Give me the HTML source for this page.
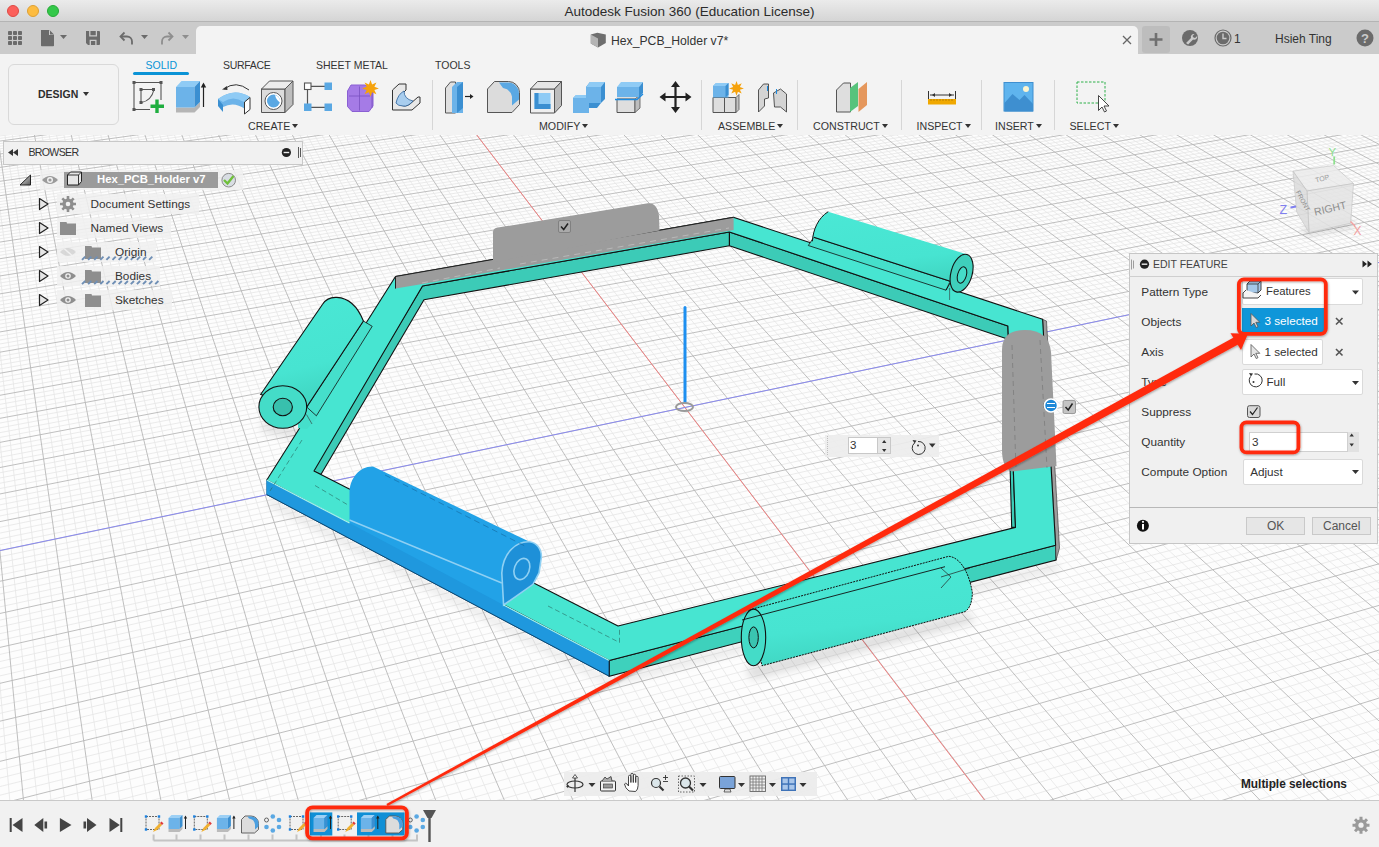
<!DOCTYPE html>
<html><head><meta charset="utf-8">
<style>
*{box-sizing:border-box;margin:0;padding:0}
html,body{width:1379px;height:847px;overflow:hidden;background:#f2f2f2;font-family:"Liberation Sans",sans-serif;color:#333}
.abs{position:absolute}
#title{left:0;top:0;width:1379px;height:22px;background:linear-gradient(#ebebeb,#d5d5d5);border-bottom:1px solid #b4b4b4}
#title .t{position:absolute;left:0;width:1379px;top:4px;text-align:center;font-size:13.5px;color:#2b2b2b}
.tl{position:absolute;top:5px;width:12px;height:12px;border-radius:50%}
#tabbar{left:0;top:22px;width:1379px;height:32px;background:#cbcbcb}
#acttab{left:196px;top:26px;width:942px;height:28px;background:#f3f3f3;border-radius:5px 5px 0 0}
#toolbar{left:0;top:54px;width:1379px;height:81px;background:#f3f3f3}
#viewport{left:0;top:135px;width:1379px;height:665px;background:#fdfdfd;overflow:hidden}
#timeline{left:0;top:800px;width:1379px;height:47px;background:#f1f1f1;border-top:1px solid #c9c9c9}
.lbl{position:absolute;font-size:11px;color:#333;white-space:nowrap}
.dd{display:inline-block;width:0;height:0;border-left:3px solid transparent;border-right:3px solid transparent;border-top:4px solid #333;vertical-align:middle;margin-left:2px;position:relative;top:-1px}
</style></head>
<body>
<div id="title" class="abs">
  <div class="tl" style="left:7px;background:#fc605b;border:0.5px solid #de4a44"></div>
  <div class="tl" style="left:27px;background:#fdbc40;border:0.5px solid #dea033"></div>
  <div class="tl" style="left:47px;background:#34c84a;border:0.5px solid #27aa37"></div>
  <div class="t">Autodesk Fusion 360 (Education License)</div>
</div>
<div id="tabbar" class="abs">
<svg width="200" height="31" style="position:absolute;left:0;top:0">
 <g fill="#6b6b6b">
  <rect x="8" y="9" width="4" height="4" rx="0.8"/><rect x="13" y="9" width="4" height="4" rx="0.8"/><rect x="18" y="9" width="4" height="4" rx="0.8"/>
  <rect x="8" y="14" width="4" height="4" rx="0.8"/><rect x="13" y="14" width="4" height="4" rx="0.8"/><rect x="18" y="14" width="4" height="4" rx="0.8"/>
  <rect x="8" y="19" width="4" height="4" rx="0.8"/><rect x="13" y="19" width="4" height="4" rx="0.8"/><rect x="18" y="19" width="4" height="4" rx="0.8"/>
  <path d="M41 8h8l5 5v10.5a0.8 0.8 0 0 1-0.8 0.8H41.8a0.8 0.8 0 0 1-0.8-0.8z"/>
  <path d="M60 13h7l-3.5 4z"/>
  <path d="M86 9h13a1 1 0 0 1 1 1v12a1 1 0 0 1-1 1H88l-2-2z"/>
  <path d="M124.5 10.5l-4 4 4 4" fill="none" stroke="#6b6b6b" stroke-width="1.8"/><path d="M121 14.5h6a5 5 0 0 1 5 5v3" fill="none" stroke="#6b6b6b" stroke-width="1.8"/>
  <path d="M141 13h7l-3.5 4z"/>
 </g>
 <path d="M89.8 9v4.8h6.6V9" stroke="#cbcbcb" stroke-width="1.3" fill="none"/>
 <path d="M90.3 23v-4.6h5.6V23" stroke="#cbcbcb" stroke-width="1.3" fill="none"/>
 <path d="M49 8v5h5" fill="#cbcbcb"/><path d="M50 8.5l4 4h-4z" fill="#6b6b6b"/>
 <g fill="#8e8e8e"><path d="M168.5 10.5l4 4-4 4" fill="none" stroke="#8e8e8e" stroke-width="1.8"/><path d="M172 14.5h-5a5 5 0 0 0-5 5v3" fill="none" stroke="#8e8e8e" stroke-width="1.8"/><path d="M182 13h7l-3.5 4z"/></g>
</svg>
<svg width="240" height="31" style="position:absolute;left:1139px;top:0">
 <rect x="3" y="4" width="28" height="27" rx="3" fill="#bdbdbd"/>
 <path d="M17 11v13M10.5 17.5h13" stroke="#707070" stroke-width="2.6"/>
 <circle cx="51" cy="16" r="8" fill="#6b6b6b"/>
 <path d="M47 21l5-5a3 3 0 0 1 3.5-4l-2 2 1 1.5 1.6 0.4 2-2a3 3 0 0 1-4 3.6l-5 5z" fill="#cbcbcb"/>
 <circle cx="84" cy="16" r="8" fill="none" stroke="#6b6b6b" stroke-width="1.2"/>
 <circle cx="84" cy="16" r="6.3" fill="#6b6b6b"/>
 <path d="M84 11.5v5h3.5" stroke="#cbcbcb" stroke-width="1.4" fill="none"/>
 <text x="95" y="21" font-size="12" fill="#333" font-family="Liberation Sans">1</text>
 <text x="136" y="21" font-size="12" fill="#333" font-family="Liberation Sans">Hsieh Ting</text>
 <circle cx="226" cy="16" r="8.5" fill="#6b6b6b"/>
 <text x="226" y="21" font-size="13" font-weight="700" fill="#cbcbcb" text-anchor="middle" font-family="Liberation Sans">?</text>
</svg>
</div>
<div id="acttab" class="abs">
 <svg width="20" height="20" style="position:absolute;left:394px;top:5px"><path d="M0.8 3.5l6.5-1.8 8.5 1.8v8.5l-7.8 4.5-7.2-4z" fill="#6e6e6e"/><path d="M0.8 3.5l7.2 4v9l-7.2-4z" fill="#b4b4b4"/></svg>
 <div class="lbl" style="left:415px;top:8px;font-size:12.2px;color:#333">Hex_PCB_Holder v7*</div>
 <svg width="14" height="14" style="position:absolute;left:924px;top:7px"><path d="M3 3l8 8M11 3l-8 8" stroke="#666" stroke-width="1.3"/></svg>
</div>
<div id="toolbar" class="abs">
 <div class="abs" style="left:8px;top:10px;width:111px;height:61px;border:1.5px solid #d9d9d9;border-radius:6px"></div>
 <div class="lbl" style="left:38px;top:34px;font-size:10.5px;font-weight:700;color:#2d2d2d">DESIGN<span class="dd" style="margin-left:5px"></span></div>
 <div class="lbl" style="left:145.5px;top:5px;font-size:10.5px;color:#0a93d6">SOLID</div>
 <div class="abs" style="left:133px;top:18px;width:56px;height:3px;background:#0a93d6;border-radius:1.5px"></div>
 <div class="lbl" style="left:223px;top:5px;font-size:10.5px;letter-spacing:-0.3px;color:#333">SURFACE</div>
 <div class="lbl" style="left:316px;top:5px;font-size:10.5px;color:#333">SHEET METAL</div>
 <div class="lbl" style="left:435px;top:5px;font-size:10.5px;color:#333">TOOLS</div>
 <div class="lbl" style="left:248px;top:66px;font-size:10.65px">CREATE<span class="dd"></span></div>
 <div class="lbl" style="left:539px;top:66px;font-size:10.65px">MODIFY<span class="dd"></span></div>
 <div class="lbl" style="left:718px;top:66px;font-size:10.65px">ASSEMBLE<span class="dd"></span></div>
 <div class="lbl" style="left:813px;top:66px;font-size:10.65px">CONSTRUCT<span class="dd"></span></div>
 <div class="lbl" style="left:916.5px;top:66px;font-size:10.65px">INSPECT<span class="dd"></span></div>
 <div class="lbl" style="left:995px;top:66px;font-size:10.65px">INSERT<span class="dd"></span></div>
 <div class="lbl" style="left:1069.5px;top:66px;font-size:10.65px">SELECT<span class="dd"></span></div>
 <svg width="1379" height="81" viewBox="0 54 1379 81" style="position:absolute;left:0;top:0">
  <g stroke="#d6d6d6" stroke-width="1"><path d="M432.5 80v50M701.5 80v50M797.5 80v50M901.5 80v50M981.5 80v50M1054.5 80v50"/></g>
  <g id="sketch">
 <path d="M134 82.5h27v27h-27z M141 89.5h13 M141 89.5v13" fill="none" stroke="#555" stroke-width="1.1"/>
 <path d="M141.5 102.5q10-2 12.5-13" fill="none" stroke="#555" stroke-width="1.1"/>
 <g fill="#555"><rect x="132.5" y="81" width="3" height="3"/><rect x="159.5" y="81" width="3" height="3"/><rect x="132.5" y="108" width="3" height="3"/><rect x="139.5" y="88" width="3" height="3"/><rect x="152" y="88" width="3" height="3"/><rect x="139.5" y="101" width="3" height="3"/></g>
 <rect x="150" y="100" width="15" height="13" fill="#f3f3f3"/>
 <path d="M157 99.5v13.5M150.5 106.2h13.5" stroke="#1fae3f" stroke-width="3.4"/>
</g>
<g id="extrude">
 <path d="M176 107.5h18.5l5.5-5.5v5l-5.5 5.5H176z" fill="#b5b5b5"/>
 <path d="M176 87h18.5v20.5H176z" fill="#6cb3e9"/>
 <path d="M176 87l5.5-6h18.5l-5.5 6z" fill="#8fcbf5"/>
 <path d="M194.5 87l5.5-6v21l-5.5 5.5z" fill="#3b8fd1"/>
 <path d="M203.5 107V84" stroke="#222" stroke-width="1.2"/><path d="M200.8 87.5l2.7-5 2.7 5z" fill="#222"/>
</g>
<g id="revolve">
 <path d="M218 99q16-12 32-2v6l-5 6q-11-8-22-2l-5-3z" fill="#6cb3e9"/>
 <path d="M218 99q16-12 32-2l-6 5q-11-7-21 0z" fill="#8fcbf5"/>
 <path d="M218 99v7l5 6v-7z" fill="#3b8fd1"/>
 <path d="M244.5 102l5.5-4.5v12l-5.5 4.5z" fill="#fff" stroke="#333" stroke-width="1"/>
 <path d="M224 89q12-9 25 1" fill="none" stroke="#333" stroke-width="1"/><path d="M222 89.5l5-3.5 0.5 4z" fill="#333"/>
</g>
<g id="hole">
 <path d="M261.5 89h23.5v23.5h-23.5z" fill="#dcdcdc" stroke="#555" stroke-width="1"/>
 <path d="M261.5 89l8-8h23.5l-8 8z" fill="#ececec" stroke="#555" stroke-width="1"/>
 <path d="M285 89l8-8v23.5l-8 8z" fill="#bdbdbd" stroke="#555" stroke-width="1"/>
 <circle cx="273.5" cy="101" r="8.5" fill="#fff" stroke="#555" stroke-width="1"/>
 <circle cx="273.5" cy="101" r="6.5" fill="#5aa8e3"/>
 <path d="M275 95q1 5 5 7.5a6.5 6.5 0 0 0-5-7.5z" fill="#fff"/>
</g>
<g id="pattern">
 <path d="M311 86.3h14M307.5 89.6v14.4M311 107.3h14" stroke="#555" stroke-width="1.2"/>
 <rect x="304.5" y="83" width="6.5" height="6.5" fill="#fff" stroke="#555" stroke-width="1.1"/>
 <rect x="324.5" y="82.5" width="7.5" height="7.5" fill="#5aa8e3"/>
 <rect x="304" y="103.5" width="7.5" height="7.5" fill="#5aa8e3"/>
 <rect x="324.5" y="103.5" width="7.5" height="7.5" fill="#5aa8e3"/>
</g>
<g id="form">
 <path d="M351 85h14l8 6v15l-4 5.5h-17l-4.5-5v-15.5z" fill="#a57be6" stroke="#8a5fd3" stroke-width="1"/>
 <path d="M349 96h21M359.5 86.5v24M372 92v16" stroke="#7a52c0" stroke-width="0.8"/>
 <path d="M370.5 80l1.6 4.5 4.3-2-2 4.3 4.5 1.6-4.5 1.6 2 4.3-4.3-2-1.6 4.5-1.6-4.5-4.3 2 2-4.3-4.5-1.6 4.5-1.6-2-4.3 4.3 2z" fill="#f5a20c"/>
</g>
<g id="sweep">
 <path d="M392.5 90l6.5-6h7v6l-6 6v8q4 4 10 0l8-7h2v6l-8 7h-19.5z" fill="#e8e8e8" stroke="#333" stroke-width="1"/>
 <path d="M396 103q2-9 8-12 0 8 9 10-5 6-10 5-5-0-7-3z" fill="#a8cdee" stroke="#2a5f9a" stroke-width="0.8"/>
</g>
<g id="presspull">
 <path d="M445.5 88l5-6h5v31h-10z" fill="#e0e0e0" stroke="#555" stroke-width="1"/>
 <path d="M452 87l5-5h6v31h-11z" fill="#6cb3e9"/><path d="M463 82v26l-6 5V87z" fill="#3b8fd1"/>
 <path d="M465 96.5h6" stroke="#222" stroke-width="1.2"/><path d="M470 94l3.5 2.5-3.5 2.5z" fill="#222"/>
</g>
<g id="fillet">
 <path d="M487.5 89l7-7.5h14a11 11 0 0 1 11 11v12l-7.5 8h-24.5z" fill="#dcdcdc" stroke="#555" stroke-width="1"/>
 <path d="M499 82.5h9a11 11 0 0 1 11 11v6l-7 6v-9a11 11 0 0 0-9-8.5z" fill="#5aa8e3"/>
</g>
<g id="shell">
 <path d="M530.5 89h24v24h-24z" fill="#efefef" stroke="#555" stroke-width="1"/>
 <path d="M530.5 89l7-7.5h24l-7 7.5z" fill="#e6e6e6" stroke="#555" stroke-width="1"/>
 <path d="M554.5 89l7-7.5v24l-7 7.5z" fill="#bdbdbd" stroke="#555" stroke-width="1"/>
 <path d="M534.5 93h16v16h-16z" fill="#8fcbf5"/><path d="M534.5 93h4v11h12v5h-16z" fill="#3b8fd1"/>
</g>
<g id="combine">
 <path d="M586 87l4-5h15v17l-4 4z" fill="#3b8fd1"/><path d="M586 87l4-5h15l-4 5z" fill="#8fcbf5"/>
 <path d="M573 98l3-3h13v18h-16z" fill="#6cb3e9"/><path d="M586 87h15v16h-12v10h-16V98h13z" fill="#6cb3e9"/>
 <path d="M573 98l3-3h10v3z" fill="#8fcbf5"/><path d="M589 103h12l-4 5h-8z" fill="#3b8fd1"/>
</g>
<g id="split">
 <path d="M617 94h18v-5l5-4.5v14l-5 4h-18z" fill="#dedede"/><path d="M617 99h18v13.5h-18z" fill="#dedede" stroke="#555" stroke-width="1"/>
 <path d="M635 99l5-4v13l-5 4.5z" fill="#bdbdbd" stroke="#555" stroke-width="0.8"/>
 <path d="M617 87l4-5h22l-4 5z" fill="#8fcbf5"/><path d="M617 87h22v10h-22z" fill="#6cb3e9"/><path d="M639 87l4-5v11l-4 4z" fill="#3b8fd1"/>
 <path d="M615 99.5h22l6-5.5" stroke="#1d8be0" stroke-width="1.3" fill="none"/>
</g>
<g id="move">
 <path d="M675.5 84v26M662 97h27" stroke="#222" stroke-width="2.2"/>
 <path d="M675.5 81l-4.5 6h9zM675.5 113l-4.5-6h9zM659.5 97l6-4.5v9zM691.5 97l-6-4.5v9z" fill="#222"/>
</g>
<g id="newcomp">
 <path d="M713 97.5h11.5v15H713zM724.5 97.5h11.5v15h-11.5z" fill="#dedede" stroke="#555" stroke-width="1"/>
 <path d="M736 97.5l3-3v15l-3 3z" fill="#c4c4c4" stroke="#555" stroke-width="0.8"/>
 <path d="M713 86l3-3h12.5v14.5H713z" fill="#6cb3e9"/><path d="M713 86l3-3h12.5l-3 3z" fill="#8fcbf5"/><path d="M725.5 86l3-3v11.5l-3 3z" fill="#3b8fd1"/>
 <path d="M736.5 81l1.4 4 3.8-1.8-1.8 3.8 4 1.4-4 1.4 1.8 3.8-3.8-1.8-1.4 4-1.4-4-3.8 1.8 1.8-3.8-4-1.4 4-1.4-1.8-3.8 3.8 1.8z" fill="#f5a20c"/>
</g>
<g id="joint">
 <path d="M758.5 90l5-6h5v14l-4 1v7l-6 6z" fill="#d4d4d4" stroke="#444" stroke-width="0.9"/>
 <path d="M773.5 93l7-4 6 5v18l-6-5h-6z" fill="#d4d4d4" stroke="#444" stroke-width="0.9"/>
 <path d="M767.5 91v-5M776.5 89v5" stroke="#1d8be0" stroke-width="1"/>
</g>
<g id="construct">
 <path d="M836.5 90l7-7h7v29h-14z" fill="#dedede" stroke="#555" stroke-width="1"/>
 <path d="M850 88l8-6v24l-8 6z" fill="#57c37c"/>
 <path d="M858 100l8-7v-11l-8 6z" fill="#fff0"/><path d="M857.5 93l8.5-7v23l-8.5 7z" fill="#e5975c" transform="translate(1 -4)"/>
</g>
<g id="measure">
 <path d="M928.5 91v8M955.5 91v8M930 95h24" stroke="#333" stroke-width="1"/>
 <path d="M932 95l3-2v4zM952 95l-3-2v4z" fill="#333"/>
 <rect x="928" y="99" width="28" height="5.5" fill="#f0a800"/>
 <path d="M931 99v2M934 99v2M937 99v2M940 99v2M943 99v2M946 99v2M949 99v2M952 99v2" stroke="#9a6a00" stroke-width="0.6"/>
</g>
<g id="insert">
 <rect x="1004" y="82.5" width="29" height="28.5" fill="#5fb4ee" stroke="#3f8fd0" stroke-width="1"/>
 <path d="M1004.5 103l8-9 7 6 5-5 8.5 9v7.5h-28.5z" fill="#3e8fd0"/>
 <circle cx="1026" cy="89" r="3" fill="#fdf5d0"/>
</g>
<g id="select">
 <rect x="1077" y="82" width="28" height="21" fill="none" stroke="#2eb04a" stroke-width="1" stroke-dasharray="2.5 1.5"/>
 <path d="M1098.5 95.5v15l3.5-3.5 2.5 5 2-1-2.5-5h5z" fill="#fff" stroke="#333" stroke-width="0.9"/>
</g>

 </svg>
</div>
<div id="viewport" class="abs">
<svg width="1379" height="665" viewBox="0 135 1379 665" style="position:absolute;left:0;top:0">
<path d="M-1361.4 2322.1L-418.7 90.8M-1327.2 2307.7L-411.4 89.9M-1293.3 2293.4L-404.1 89.1M-1259.7 2279.3L-396.8 88.2M-1193.4 2251.4L-382.3 86.5M-1160.8 2237.7L-375.1 85.6M-1128.5 2224.1L-367.9 84.8M-1096.4 2210.7L-360.7 83.9M-1033.3 2184.1L-346.4 82.2M-1002.1 2171.0L-339.2 81.4M-971.3 2158.0L-332.1 80.5M-940.7 2145.2L-325.0 79.7M-880.4 2119.8L-310.9 78.0M-850.7 2107.3L-303.8 77.1M-821.2 2094.9L-296.8 76.3M-792.0 2082.7L-289.8 75.5M-734.4 2058.4L-275.8 73.8M-705.9 2046.5L-268.8 73.0M-677.8 2034.6L-261.9 72.1M-649.8 2022.9L-254.9 71.3M-594.7 1999.7L-241.1 69.7M-567.5 1988.3L-234.2 68.8M-540.5 1976.9L-227.3 68.0M-513.8 1965.7L-220.5 67.2M-461.0 1943.5L-206.8 65.6M-434.9 1932.5L-200.0 64.8M-409.1 1921.7L-193.2 63.9M-383.5 1910.9L-186.4 63.1M-332.8 1889.6L-172.9 61.5M-307.9 1879.1L-166.2 60.7M-283.1 1868.7L-159.5 59.9M-258.5 1858.4L-152.8 59.1M-210.0 1838.0L-139.4 57.5M-186.0 1827.9L-132.8 56.7M-162.2 1817.9L-126.1 56.0M-138.6 1808.0L-119.5 55.2M-92.0 1788.4L-106.3 53.6M-69.0 1778.7L-99.7 52.8M-46.1 1769.1L-93.2 52.0M-23.5 1759.6L-86.6 51.2M21.3 1740.7L-73.6 49.7M43.4 1731.4L-67.1 48.9M65.4 1722.2L-60.6 48.1M87.2 1713.0L-54.1 47.4M130.3 1694.9L-41.2 45.8M151.6 1686.0L-34.8 45.1M172.7 1677.1L-28.4 44.3M193.6 1668.3L-22.0 43.5M235.1 1650.8L-9.2 42.0M255.6 1642.2L-2.8 41.3M275.9 1633.7L3.5 40.5M296.1 1625.2L9.8 39.8M336.0 1608.4L22.5 38.2M355.8 1600.1L28.7 37.5M375.4 1591.9L35.0 36.8M394.8 1583.7L41.3 36.0M433.3 1567.5L53.8 34.5M452.3 1559.5L60.0 33.8M471.2 1551.6L66.2 33.0M490.0 1543.7L72.4 32.3M527.1 1528.1L84.7 30.8M545.4 1520.4L90.9 30.1M563.6 1512.7L97.0 29.4M581.7 1505.1L103.1 28.6M617.5 1490.1L115.3 27.2M635.3 1482.6L121.4 26.5M652.8 1475.2L127.5 25.7M670.3 1467.9L133.5 25.0M704.9 1453.3L145.6 23.6M722.0 1446.1L151.6 22.9M739.0 1439.0L157.6 22.1M755.9 1431.9L163.6 21.4M789.3 1417.9L175.6 20.0M805.8 1410.9L181.5 19.3M822.2 1404.0L187.5 18.6M838.5 1397.1L193.4 17.9M870.8 1383.6L205.2 16.5M886.8 1376.8L211.1 15.8M902.7 1370.2L217.0 15.1M918.5 1363.5L222.8 14.4M949.7 1350.4L234.5 13.0M965.2 1343.9L240.3 12.3M980.5 1337.4L246.2 11.6M995.8 1331.0L252.0 10.9M1026.0 1318.3L263.5 9.5M1041.0 1312.0L269.3 8.8M1055.9 1305.8L275.0 8.1M1070.7 1299.5L280.8 7.5M1099.9 1287.2L292.2 6.1M1114.4 1281.1L297.9 5.4M1128.9 1275.1L303.6 4.7M1143.2 1269.1L309.3 4.1M1171.5 1257.1L320.6 2.7M1185.6 1251.2L326.2 2.0M1199.5 1245.4L331.9 1.4M1213.4 1239.5L337.5 0.7M1240.9 1228.0L348.7 -0.6M1254.5 1222.2L354.3 -1.3M1268.1 1216.5L359.8 -2.0M1281.5 1210.9L365.4 -2.6M1308.2 1199.7L376.5 -3.9M1321.4 1194.1L382.0 -4.6M1334.5 1188.6L387.5 -5.3M1347.6 1183.1L393.0 -5.9M1373.5 1172.2L404.0 -7.2M1386.3 1166.9L409.5 -7.9M1399.0 1161.5L414.9 -8.5M1411.7 1156.2L420.4 -9.2M1436.8 1145.6L431.2 -10.5M1449.2 1140.4L436.6 -11.1M1461.6 1135.2L442.0 -11.8M1473.9 1130.0L447.4 -12.4M1498.3 1119.8L458.2 -13.7M1510.4 1114.7L463.5 -14.3M1522.4 1109.6L468.9 -15.0M1534.3 1104.6L474.2 -15.6M1558.0 1094.6L484.8 -16.9M1569.8 1089.7L490.1 -17.5M1581.5 1084.8L495.4 -18.1M1593.1 1079.9L500.7 -18.7M1616.1 1070.2L511.2 -20.0M1627.5 1065.4L516.5 -20.6M1638.9 1060.7L521.7 -21.2M1650.1 1055.9L527.0 -21.9M1672.5 1046.5L537.4 -23.1M1683.6 1041.8L542.6 -23.7M1694.7 1037.2L547.8 -24.4M1705.6 1032.6L552.9 -25.0M1727.4 1023.4L563.2 -26.2M1738.2 1018.9L568.4 -26.8M1748.9 1014.4L573.5 -27.4M1759.6 1009.9L578.6 -28.0M1780.8 1001.0L588.9 -29.2M1791.3 996.6L593.9 -29.9M1801.8 992.2L599.0 -30.5M1812.2 987.8L604.1 -31.1M1832.8 979.1L614.2 -32.3M1843.0 974.8L619.2 -32.9M1853.2 970.5L624.3 -33.5M1863.3 966.3L629.3 -34.1M1883.4 957.8L639.3 -35.3M1893.4 953.7L644.3 -35.9M1903.3 949.5L649.3 -36.4M1913.1 945.3L654.2 -37.0M1932.7 937.1L664.2 -38.2M1942.4 933.0L669.1 -38.8M1952.0 929.0L674.0 -39.4M1961.6 924.9L679.0 -40.0M1980.7 916.9L688.8 -41.2M1990.2 913.0L693.7 -41.7M1999.6 909.0L698.5 -42.3M2008.9 905.1L703.4 -42.9M2027.5 897.3L713.1 -44.1M2036.7 893.4L718.0 -44.6M2045.9 889.5L722.8 -45.2M2055.0 885.7L727.6 -45.8M2073.1 878.1L737.3 -46.9M2082.1 874.3L742.1 -47.5M2091.1 870.5L746.9 -48.1M2100.0 866.8L751.6 -48.6M2117.7 859.4L761.2 -49.8M2126.4 855.7L765.9 -50.3M2135.1 852.0L770.7 -50.9M2143.8 848.4L775.4 -51.5M2161.1 841.1L784.8 -52.6M2169.6 837.5L789.5 -53.2M2178.1 833.9L794.2 -53.7M2186.6 830.4L798.9 -54.3M2203.4 823.3L808.3 -55.4M2211.8 819.8L812.9 -56.0M2220.1 816.3L817.6 -56.5M2228.4 812.8L822.2 -57.1M2244.8 805.9L831.5 -58.2M2253.0 802.5L836.1 -58.7M2261.1 799.1L840.7 -59.3M2269.1 795.7L845.3 -59.8M2285.2 788.9L854.5 -60.9M2293.1 785.6L859.1 -61.4M2301.1 782.2L863.6 -62.0M2309.0 778.9L868.2 -62.5M2324.6 772.3L877.3 -63.6M2332.4 769.1L881.8 -64.2M2340.1 765.8L886.3 -64.7M2347.9 762.6L890.8 -65.2M2363.2 756.1L899.8 -66.3M2370.8 752.9L904.3 -66.8M2378.3 749.8L908.8 -67.4M2385.9 746.6L913.3 -67.9M2400.8 740.3L922.2 -69.0M2408.2 737.2L926.6 -69.5M2415.6 734.1L931.1 -70.0M2423.0 731.0L935.5 -70.6M2437.6 724.8L944.3 -71.6M2444.9 721.8L948.7 -72.1M2452.1 718.7L953.1 -72.7M2459.3 715.7L957.5 -73.2M2473.6 709.7L966.3 -74.2M2480.7 706.7L970.6 -74.7M2487.8 703.7L975.0 -75.3M2494.8 700.8L979.3 -75.8M2508.8 694.9L988.0 -76.8M2515.8 692.0L992.3 -77.3M2522.7 689.1L996.6 -77.8M2529.6 686.2L1001.0 -78.4M2543.3 680.4L1009.5 -79.4M2550.0 677.6L1013.8 -79.9M2556.8 674.7L1018.1 -80.4M2563.6 671.9L1022.4 -80.9M2576.9 666.3L1030.9 -81.9M2583.6 663.5L1035.1 -82.4M2590.2 660.7L1039.4 -82.9M2596.8 657.9L1043.6 -83.4M2609.9 652.4L1052.0 -84.4M2616.4 649.7L1056.2 -84.9M2622.9 646.9L1060.4 -85.4M2629.4 644.2L1064.6 -85.9M2642.2 638.8L1073.0 -86.9M2648.6 636.1L1077.2 -87.4M2654.9 633.5L1081.3 -87.9M2661.2 630.8L1085.5 -88.4M2673.8 625.5L1093.7 -89.4M2680.0 622.9L1097.9 -89.9M2686.3 620.3L1102.0 -90.4M2692.4 617.7L1106.1 -90.9M2704.8 612.5L1114.3 -91.9M2710.9 610.0L1118.4 -92.4M2717.0 607.4L1122.5 -92.8M2723.0 604.8L1126.6 -93.3M2735.1 599.8L1134.7 -94.3M2741.1 597.3L1138.8 -94.8M2747.0 594.7L1142.8 -95.3M2753.0 592.3L1146.9 -95.7M2764.8 587.3L1154.9 -96.7M2770.6 584.8L1159.0 -97.2M2776.5 582.4L1163.0 -97.7M2782.3 579.9L1167.0 -98.1M2793.9 575.0L1175.0 -99.1M2799.6 572.6L1178.9 -99.6M2805.4 570.2L1182.9 -100.0M2811.1 567.8L1186.9 -100.5M-1380.4 2300.4L2802.2 559.5M-1365.1 2265.0L2787.8 553.6M-1350.1 2230.4L2773.6 547.7M-1335.6 2196.7L2759.4 541.9M-1307.4 2131.5L2731.6 530.5M-1293.8 2100.0L2717.9 524.9M-1280.5 2069.3L2704.3 519.3M-1267.5 2039.2L2690.8 513.8M-1242.4 1981.0L2664.3 502.9M-1230.2 1952.9L2651.2 497.6M-1218.3 1925.3L2638.3 492.3M-1206.7 1898.4L2625.5 487.0M-1184.1 1846.1L2600.1 476.6M-1173.1 1820.7L2587.7 471.5M-1162.4 1795.9L2575.3 466.5M-1151.9 1771.6L2563.1 461.4M-1131.5 1724.4L2538.9 451.5M-1121.6 1701.4L2527.0 446.6M-1111.9 1679.0L2515.1 441.8M-1102.3 1656.9L2503.4 437.0M-1083.8 1614.0L2480.3 427.5M-1074.8 1593.2L2468.9 422.9M-1066.0 1572.8L2457.6 418.2M-1057.3 1552.7L2446.4 413.6M-1040.4 1513.6L2424.3 404.6M-1032.2 1494.5L2413.4 400.1M-1024.1 1475.9L2402.5 395.7M-1016.2 1457.5L2391.8 391.3M-1000.7 1421.7L2370.6 382.6M-993.2 1404.3L2360.2 378.3M-985.8 1387.1L2349.8 374.0M-978.5 1370.2L2339.5 369.8M-964.3 1337.4L2319.2 361.5M-957.3 1321.3L2309.2 357.4M-950.5 1305.5L2299.2 353.3M-943.8 1290.0L2289.3 349.3M-930.7 1259.7L2269.8 341.3M-924.3 1244.8L2260.2 337.3M-918.0 1230.3L2250.7 333.4M-911.8 1215.9L2241.2 329.5M-899.7 1187.8L2222.5 321.8M-893.7 1174.1L2213.2 318.0M-887.9 1160.6L2204.0 314.3M-882.1 1147.3L2194.9 310.6M-870.9 1121.3L2176.9 303.2M-865.4 1108.6L2168.0 299.5M-860.0 1096.0L2159.2 295.9M-854.6 1083.6L2150.4 292.3M-844.2 1059.4L2133.1 285.2M-839.0 1047.6L2124.6 281.7M-834.0 1035.9L2116.1 278.2M-829.0 1024.3L2107.6 274.8M-819.2 1001.8L2091.0 267.9M-814.5 990.7L2082.7 264.6M-809.7 979.8L2074.6 261.2M-805.1 969.0L2066.4 257.9M-796.0 947.9L2050.4 251.3M-791.5 937.5L2042.4 248.1M-787.1 927.3L2034.6 244.8M-782.7 917.2L2026.7 241.6M-774.2 897.4L2011.3 235.3M-770.0 887.7L2003.6 232.1M-765.8 878.2L1996.0 229.0M-761.7 868.7L1988.4 225.9M-753.7 850.1L1973.5 219.8M-749.8 841.0L1966.1 216.8M-745.9 832.0L1958.8 213.8M-742.1 823.1L1951.5 210.8M-734.5 805.6L1937.1 204.9M-730.8 797.1L1930.0 202.0M-727.1 788.6L1922.9 199.1M-723.5 780.2L1915.9 196.2M-716.4 763.7L1901.9 190.5M-712.9 755.7L1895.0 187.6M-709.4 747.7L1888.2 184.8M-706.0 739.8L1881.4 182.0M-699.3 724.2L1867.9 176.5M-696.0 716.6L1861.3 173.8M-692.8 709.0L1854.7 171.1M-689.5 701.6L1848.1 168.4M-683.2 686.9L1835.1 163.1M-680.1 679.6L1828.7 160.4M-677.0 672.5L1822.3 157.8M-673.9 665.4L1815.9 155.2M-667.9 651.5L1803.3 150.0M-664.9 644.7L1797.1 147.5M-662.0 637.9L1790.9 144.9M-659.1 631.2L1784.7 142.4M-653.4 618.0L1772.6 137.4M-650.6 611.5L1766.5 135.0M-647.8 605.1L1760.5 132.5M-645.1 598.7L1754.6 130.1M-639.7 586.2L1742.8 125.2M-637.0 580.0L1736.9 122.8M-634.4 573.9L1731.1 120.4M-631.8 567.9L1725.3 118.1M-626.6 555.9L1713.9 113.4M-624.1 550.1L1708.2 111.1M-621.6 544.3L1702.6 108.8M-619.1 538.5L1697.0 106.5M-614.2 527.2L1685.9 101.9M-611.8 521.6L1680.4 99.7M-609.4 516.0L1675.0 97.4M-607.0 510.6L1669.5 95.2M-602.3 499.7L1658.8 90.8M-600.0 494.4L1653.5 88.6M-597.7 489.1L1648.2 86.5M-595.5 483.9L1642.9 84.3M-591.0 473.6L1632.5 80.0M-588.8 468.5L1627.3 77.9M-586.6 463.5L1622.2 75.8M-584.5 458.5L1617.0 73.7M-580.2 448.6L1606.9 69.5M-578.1 443.7L1601.9 67.5M-576.0 438.9L1596.9 65.4M-574.0 434.2L1591.9 63.4M-569.9 424.7L1582.1 59.4M-567.9 420.1L1577.2 57.4M-565.9 415.5L1572.4 55.4M-563.9 410.9L1567.6 53.4M-560.0 401.9L1558.0 49.5M-558.1 397.4L1553.2 47.5M-556.2 393.0L1548.5 45.6M-554.3 388.6L1543.9 43.7M-550.6 380.0L1534.6 39.9M-548.7 375.7L1529.9 38.0M-546.9 371.5L1525.4 36.1M-545.1 367.3L1520.8 34.2M-541.5 359.0L1511.8 30.5M-539.8 354.9L1507.3 28.7M-538.0 350.9L1502.8 26.9M-536.3 346.9L1498.4 25.1M-532.8 338.9L1489.6 21.5M-531.1 335.0L1485.2 19.7M-529.4 331.1L1480.9 17.9M-527.8 327.2L1476.6 16.1M-524.5 319.6L1468.0 12.6M-522.8 315.8L1463.8 10.9M-521.2 312.1L1459.6 9.2M-519.6 308.3L1455.4 7.4M-516.4 301.0L1447.0 4.0M-514.9 297.4L1442.9 2.3M-513.3 293.8L1438.8 0.6M-511.8 290.2L1434.7 -1.0M-508.7 283.1L1426.6 -4.4M-507.2 279.6L1422.6 -6.0M-505.7 276.2L1418.6 -7.7M-504.2 272.7L1414.6 -9.3M-501.3 265.9L1406.7 -12.5M-499.8 262.6L1402.8 -14.1M-498.4 259.2L1398.9 -15.7M-497.0 255.9L1395.0 -17.3M-494.1 249.4L1387.3 -20.5M-492.7 246.1L1383.5 -22.0M-491.3 242.9L1379.7 -23.6M-490.0 239.7L1375.9 -25.2M-487.2 233.4L1368.4 -28.2M-485.9 230.3L1364.6 -29.8M-484.5 227.2L1360.9 -31.3M-483.2 224.1L1357.3 -32.8M-480.6 218.0L1349.9 -35.8M-479.3 215.0L1346.3 -37.3M-478.0 212.0L1342.7 -38.8M-476.7 209.0L1339.1 -40.2M-474.2 203.1L1331.9 -43.2M-472.9 200.2L1328.4 -44.6M-471.6 197.3L1324.9 -46.1M-470.4 194.5L1321.4 -47.5M-468.0 188.8L1314.4 -50.4M-466.7 186.0L1310.9 -51.8M-465.5 183.2L1307.5 -53.2M-464.3 180.4L1304.1 -54.6M-462.0 174.9L1297.3 -57.4M-460.8 172.2L1293.9 -58.8M-459.6 169.5L1290.5 -60.1M-458.5 166.8L1287.2 -61.5M-456.2 161.5L1280.5 -64.2M-455.0 158.9L1277.2 -65.6M-453.9 156.2L1274.0 -66.9M-452.8 153.7L1270.7 -68.3M-450.6 148.5L1264.2 -70.9M-449.5 146.0L1261.0 -72.2M-448.4 143.4L1257.8 -73.6M-447.3 140.9L1254.6 -74.9M-445.1 136.0L1248.3 -77.5M-444.1 133.5L1245.1 -78.8M-443.0 131.0L1242.0 -80.0M-442.0 128.6L1238.9 -81.3M-439.9 123.8L1232.7 -83.9M-438.8 121.4L1229.6 -85.1M-437.8 119.0L1226.5 -86.4M-436.8 116.7L1223.5 -87.6M-434.8 112.0L1217.4 -90.1M-433.8 109.7L1214.4 -91.3M-432.8 107.4L1211.4 -92.6M-431.8 105.1L1208.5 -93.8M-429.8 100.6L1202.5 -96.2M-428.9 98.3L1199.6 -97.4M-427.9 96.1L1196.7 -98.6M-427.0 93.9L1193.8 -99.8" stroke="#e6e6e6" stroke-width="0.8" fill="none"/>
<path d="M-1396.0 2336.6L-426.0 91.7M-1226.4 2265.3L-389.6 87.3M-1064.7 2197.3L-353.5 83.1M-910.4 2132.5L-317.9 78.8M-763.1 2070.5L-282.8 74.6M-622.1 2011.3L-248.0 70.5M-487.3 1954.5L-213.6 66.4M-358.0 1900.2L-179.7 62.3M-234.1 1848.1L-146.1 58.3M-115.2 1798.1L-112.9 54.4M-1.0 1750.1L-80.1 50.5M108.8 1703.9L-47.7 46.6M214.4 1659.5L-15.6 42.8M316.1 1616.8L16.2 39.0M414.1 1575.6L47.5 35.3M508.6 1535.9L78.5 31.6M599.7 1497.6L109.2 27.9M687.7 1460.6L139.6 24.3M772.6 1424.9L169.6 20.7M854.7 1390.3L199.3 17.2M934.1 1356.9L228.7 13.7M1011.0 1324.6L257.7 10.2M1085.4 1293.4L286.5 6.8M1157.4 1263.1L314.9 3.4M1227.2 1233.7L343.1 0.0M1294.9 1205.3L371.0 -3.3M1360.6 1177.7L398.5 -6.6M1424.3 1150.9L425.8 -9.8M1486.1 1124.9L452.8 -13.0M1546.2 1099.6L479.5 -16.2M1604.6 1075.1L506.0 -19.4M1661.4 1051.2L532.2 -22.5M1716.6 1028.0L558.1 -25.6M1770.3 1005.4L583.8 -28.6M1822.5 983.4L609.2 -31.7M1873.4 962.1L634.3 -34.7M1922.9 941.2L659.2 -37.6M1971.2 920.9L683.9 -40.6M2018.2 901.2L708.3 -43.5M2064.1 881.9L732.5 -46.4M2108.8 863.1L756.4 -49.2M2152.5 844.7L780.1 -52.0M2195.0 826.8L803.6 -54.8M2236.6 809.3L826.9 -57.6M2277.2 792.3L849.9 -60.4M2316.8 775.6L872.7 -63.1M2355.5 759.3L895.3 -65.8M2393.4 743.4L917.7 -68.4M2430.3 727.9L939.9 -71.1M2466.5 712.7L961.9 -73.7M2501.8 697.8L983.7 -76.3M2536.4 683.3L1005.3 -78.9M2570.3 669.1L1026.6 -81.4M2603.4 655.1L1047.8 -83.9M2635.8 641.5L1068.8 -86.4M2667.5 628.2L1089.6 -88.9M2698.6 615.1L1110.2 -91.4M2729.1 602.3L1130.7 -93.8M2758.9 589.8L1150.9 -96.2M2788.1 577.5L1171.0 -98.6M2816.8 565.4L1190.9 -101.0M-1396.0 2336.6L2816.8 565.4M-1321.3 2163.7L2745.4 536.2M-1254.8 2009.8L2677.5 508.4M-1195.3 1871.9L2612.7 481.8M-1141.6 1747.8L2550.9 456.5M-1093.0 1635.3L2491.8 432.2M-1048.8 1532.9L2435.3 409.1M-1008.4 1439.4L2381.2 386.9M-971.3 1353.7L2329.3 365.6M-937.2 1274.7L2279.5 345.2M-905.7 1201.8L2231.8 325.7M-876.5 1134.2L2185.9 306.8M-849.4 1071.4L2141.7 288.8M-824.1 1013.0L2099.3 271.4M-800.5 958.4L2058.4 254.6M-778.4 907.3L2019.0 238.4M-757.7 859.4L1981.0 222.9M-738.3 814.3L1944.3 207.8M-719.9 771.9L1908.9 193.3M-702.7 731.9L1874.7 179.3M-686.3 694.2L1841.6 165.7M-670.9 658.4L1809.6 152.6M-656.3 624.6L1778.6 139.9M-642.4 592.4L1748.6 127.6M-629.2 561.9L1719.6 115.7M-616.6 532.8L1691.5 104.2M-604.6 505.1L1664.2 93.0M-593.2 478.7L1637.7 82.1M-582.3 453.5L1612.0 71.6M-571.9 429.4L1587.0 61.4M-562.0 406.4L1562.8 51.4M-552.4 384.3L1539.2 41.8M-543.3 363.2L1516.3 32.4M-534.5 342.9L1494.0 23.3M-526.1 323.4L1472.3 14.4M-518.0 304.7L1451.2 5.7M-510.2 286.6L1430.7 -2.7M-502.8 269.3L1410.6 -10.9M-495.5 252.6L1391.1 -18.9M-488.6 236.5L1372.1 -26.7M-481.9 221.0L1353.6 -34.3M-475.4 206.1L1335.5 -41.7M-469.2 191.6L1317.9 -48.9M-463.1 177.6L1300.7 -56.0M-457.3 164.1L1283.8 -62.9M-451.7 151.1L1267.4 -69.6M-446.2 138.4L1251.4 -76.2M-440.9 126.2L1235.8 -82.6M-435.8 114.3L1220.4 -88.9M-430.8 102.8L1205.5 -95.0M-426.0 91.7L1190.9 -101.0" stroke="#b8b8b8" stroke-width="0.9" fill="none"/>
<defs>
 <filter id="blur3" x="-20%" y="-50%" width="140%" height="200%"><feGaussianBlur stdDeviation="4"/></filter>
 <linearGradient id="tealcyl" x1="0" y1="0" x2="0.25" y2="1"><stop offset="0" stop-color="#4ae8d5"/><stop offset="0.7" stop-color="#47e4d1"/><stop offset="1" stop-color="#40d6c2"/></linearGradient>
</defs>
<!-- red & blue axes -->
<path d="M476.8 135L984.5 800" stroke="#f08080" stroke-width="1"/>
<path d="M0 550.5L1379 262.5" stroke="#8a8af0" stroke-width="1"/>
<!-- shadows -->
<path d="M745 668L968 612L975 622L752 680z" fill="#000" opacity="0.12" filter="url(#blur3)"/>
<path d="M270 497L609 678L1057 562L1060 570L610 686L268 505z" fill="#000" opacity="0.08" filter="url(#blur3)"/>
<path d="M262 420L300 428L300 440L262 432z" fill="#000" opacity="0.10" filter="url(#blur3)"/>
<!-- inner faces of far walls -->
<path d="M312.4 470.8L422.5 286L729.4 232L1007.9 326L1015.5 527.4L1011.7 527.4L1006.7 338.8L729.4 245.8L424 299.8L320.9 474.5z" fill="#3ccbb7" stroke="#111" stroke-width="1.1" stroke-linejoin="round"/>
<!-- outer faces near side -->
<path d="M609.2 660.5L1055.6 545.3L1056.1 560L609.2 676.2z" fill="#3ed1bc" stroke="#111" stroke-width="1.1"/>
<path d="M266.8 480L609.2 660.5L609.2 676.2L266.8 494.6z" fill="#1f98de" stroke="#0d4f80" stroke-width="0.8"/>
<path d="M1042.6 319.3L1046.5 321L1059.5 548L1056.1 560L1055.6 545.3z" fill="#9d9d9d" stroke="#333" stroke-width="0.6"/>
<!-- top face ring -->
<path d="M266.8 480L395.5 276.5L733.3 217.3L1042.6 319.3L1055.6 545.3L609.2 660.5z M314 471L422.5 286L729.4 232L1007.9 326L1015.5 527.4L618 626z" fill="#47e5d1" fill-rule="evenodd" stroke="#111" stroke-width="1.1" stroke-linejoin="round"/>
<!-- gray top face of top segment -->
<path d="M395.5 276.5L733.6 217.3L733.6 230.1L422.5 284L395.5 288.6z" fill="#9c9c9c"/><path d="M395.5 288.6V276.5L733.6 217.3" stroke="#222" stroke-width="1" fill="none"/><path d="M729.4 232.6V245.8" stroke="#111" stroke-width="1.2"/>
<path d="M493 262.5L493 232Q493 228 498 227.5L648 203.3Q657.5 203 659 216L659.5 230.5z" fill="#9c9c9c"/>
<path d="M422 283L500 268M520 264L729 228" stroke="#d8d8d8" stroke-width="0.6" stroke-dasharray="6 5" fill="none" opacity="0.8"/>
<rect x="558.5" y="220.5" width="12" height="12" rx="1.5" fill="#aaa" stroke="#777" stroke-width="0.8"/>
<path d="M561 226.5l2.7 3 4.3-6" stroke="#222" stroke-width="1.5" fill="none"/>
<!-- left cylinder -->
<path d="M298 400L310 405L318 413L316.4 418L307 429L298 428z" fill="#45dfcb"/>
<path d="M306.5 414.5L312 424" stroke="#333" stroke-width="0.6"/>

<path d="M363.4 321L372.2 326.3L316.4 415.8L306.7 407z" fill="#45dfcb" stroke="#111" stroke-width="0.8"/>
<path d="M260.6 394.5L322.6 304.2C326 299 331 297 336.8 297.4C347 298 357 305 363.4 321L306.7 407z" fill="url(#tealcyl)" stroke="#111" stroke-width="1.1"/>
<ellipse cx="282.8" cy="407" rx="23.9" ry="21.3" fill="#44dcc8" stroke="#111" stroke-width="1.1"/>
<ellipse cx="282.8" cy="407" rx="9.6" ry="8.7" fill="#38c0ad" stroke="#111" stroke-width="1.1"/>
<!-- top-right cylinder -->
<path d="M813.8 237.2L950.2 281.3L946 290.2L808.3 245.5z" fill="#45dfcb" stroke="#111" stroke-width="0.8"/>
<path d="M812.4 241.3C813 230 818 218 828.2 211.7L967.5 254.4L955 290L946 290.2L950.2 281.3L813.8 237.2z" fill="url(#tealcyl)"/>
<path d="M813.8 237.2L950.2 281.3" stroke="#111" stroke-width="1.1"/>
<path d="M812.4 241.3C813 230 818 218 828.2 211.7" stroke="#111" stroke-width="1" fill="none"/>
<path d="M946 290.2L950 283" stroke="#111" stroke-width="1"/>
<ellipse cx="961.6" cy="273.2" rx="10.6" ry="19.4" transform="rotate(16 961.6 273.2)" fill="#3fcfbb" stroke="#111" stroke-width="1.1"/>
<ellipse cx="962" cy="275" rx="4.4" ry="8.4" transform="rotate(16 962 275)" fill="#45dcc8" stroke="#111" stroke-width="1"/>
<path d="M949.6 288V300" stroke="#333" stroke-width="0.6"/>
<!-- gray capsule right -->
<path d="M1002 350Q1002 330 1025 329.9Q1049 330 1051 352L1056.5 466L1012 471.5Q1002 468 1002 450z" fill="#9c9c9c"/>
<path d="M1012 345L1016 470M1040 340L1047 468" stroke="#555" stroke-width="0.5" stroke-dasharray="5 4" opacity="0.7"/>
<!-- bottom-right cylinder -->
<path d="M748.9 610L948.7 556.3C958 557 968 568 972.3 592.1C972.5 604 968 611 963.8 612L762 665.7z" fill="url(#tealcyl)" stroke="#111" stroke-width="1" stroke-dasharray="2 1"/>
<path d="M741.3 637.4a12.2 28.3 0 1 0 24.4 0a12.2 28.3 0 1 0 -24.4 0z" fill="#44dcc8" stroke="#111" stroke-width="1.1"/>
<ellipse cx="753.6" cy="637.4" rx="4.7" ry="10.5" fill="#3ac4b0" stroke="#111" stroke-width="1"/>
<path d="M742 620L945 566.7" stroke="#111" stroke-width="0.9"/>
<path d="M941 568l10 9-10 11M941 577l29-9" stroke="#222" stroke-width="0.7" fill="none"/>
<!-- blue cylinder -->
<path d="M266.8 480L349.5 523L349.5 493C349.5 478 360 466 373 466.5L529.6 541.8C537 543 541.4 549 541.4 557L539 573L533 584.3L503.6 605L609.2 660.5L609.2 676.2L266.8 494.6z" fill="#22a2e7"/>
<path d="M266.8 480L349.5 523L349.5 493L266.8 480z" fill="#47e5d1" opacity="0"/>
<path d="M349.5 523L503.6 605L609.2 660.5L609.2 676.2L266.8 494.6L266.8 480z" fill="#1f98de"/>
<path d="M503.6 605L501.8 573C503 552 517 541 529.6 541.8C537 543 541.4 549 541.4 557L539 573L533 584.3z" fill="#1e90d8" stroke="#8fd0f3" stroke-width="1.6"/>
<ellipse cx="521.9" cy="569" rx="7.5" ry="11" transform="rotate(20 521.9 569)" fill="#1e90d8" stroke="#8fd0f3" stroke-width="1.6"/>
<path d="M349.5 520L501.8 583" stroke="#8fd0f3" stroke-width="1.4"/>
<path d="M385 475L525 546" stroke="#0d4f80" stroke-width="0.7" stroke-dasharray="6 4" opacity="0.6"/>
<path d="M266.8 480L349.5 523" stroke="#a8f3ea" stroke-width="1.2"/><path d="M503.6 605L609.2 660.5" stroke="#a8f3ea" stroke-width="1.2"/>
<path d="M266.8 494.6L609.2 676.2" stroke="#0b3f66" stroke-width="0.9"/>
<path d="M609.2 660.5V676.2" stroke="#111" stroke-width="1"/>
<path d="M548 606L619.5 642.5V629" stroke="#2a6f66" stroke-width="0.8" stroke-dasharray="5 3" fill="none" opacity="0.8"/>
<path d="M302 440L270 491M315 485.5L348 505" stroke="#2a6f66" stroke-width="0.8" stroke-dasharray="5 3" fill="none" opacity="0.8"/>
<!-- origin axis -->
<path d="M685 307.5V402" stroke="#1e8ff0" stroke-width="3" stroke-linecap="round"/>
<ellipse cx="684.5" cy="407" rx="8.5" ry="4" fill="none" stroke="#9a9a9a" stroke-width="2"/>
<!-- small icon on capsule -->
<circle cx="1051" cy="405.5" r="6.5" fill="#1d88d8" stroke="#fff" stroke-width="1.5"/>
<path d="M1047 403.5h8M1047 407.5h8" stroke="#fff" stroke-width="1"/>
<rect x="1063" y="400.5" width="12.5" height="13" rx="1.5" fill="#c4c4c4" stroke="#8a8a8a" stroke-width="0.8"/>
<path d="M1065.5 407l2.7 3 4.3-6.5" stroke="#222" stroke-width="1.5" fill="none"/>

</svg>
</div>
<div id="timeline" class="abs"></div>
<!-- BROWSER -->
<div class="abs" style="left:3px;top:140.5px;width:299.5px;height:24px;background:#f1f1f1;border:1px solid #c8c8c8"></div>
<svg class="abs" style="left:0;top:135px" width="310" height="180">
 <path d="M13 17.5l5-3.5v7zM8 17.5l5-3.5v7z" fill="#333"/>
 <circle cx="286.4" cy="17.5" r="4.6" fill="#222"/><path d="M283.6 17.5h5.6" stroke="#eee" stroke-width="1.4"/>
 <path d="M298.5 12v11M300.5 13v9" stroke="#333" stroke-width="0.8"/>
</svg>
<div class="lbl" style="left:28.5px;top:146px;font-size:10.6px;color:#333;letter-spacing:-0.7px">BROWSER</div>
<!-- rows bg -->
<div class="abs" style="left:39.5px;top:170px;width:203px;height:20px;background:rgba(240,240,240,0.85)"></div>
<div class="abs" style="left:64px;top:172px;width:154px;height:16px;background:#9b9b9b"></div>
<div class="abs" style="left:57px;top:194px;width:141.5px;height:20px;background:rgba(240,240,240,0.85)"></div>
<div class="abs" style="left:57px;top:218px;width:113.5px;height:19.5px;background:rgba(240,240,240,0.85)"></div>
<div class="abs" style="left:57px;top:242px;width:98.5px;height:19.5px;background:rgba(240,240,240,0.85)"></div>
<div class="abs" style="left:57px;top:266px;width:103px;height:19.5px;background:rgba(240,240,240,0.85)"></div>
<div class="abs" style="left:57px;top:290px;width:114.5px;height:19.5px;background:rgba(240,240,240,0.85)"></div>
<svg class="abs" style="left:0;top:165px" width="310" height="150">
 <defs><linearGradient id="trig" x1="0" y1="0" x2="1" y2="1"><stop offset="0" stop-color="#eee"/><stop offset="1" stop-color="#555"/></linearGradient></defs>
 <path d="M20 20l10.5-10v10z" fill="url(#trig)" stroke="#222" stroke-width="1"/>
 <!-- eye root -->
 <path d="M42 15q8-8 16 0q-8 8-16 0z" fill="#9a9a9a"/><circle cx="50" cy="15" r="3" fill="#f0f0f0"/><circle cx="50" cy="15" r="1.6" fill="#9a9a9a"/>
 <!-- cube root -->
 <path d="M67.5 10l3-3h11v9.5l-3 3.5h-11z" fill="#e6e6e6" stroke="#222" stroke-width="1"/><path d="M67.5 10h11v10M78.5 10l3-3" stroke="#222" stroke-width="0.9" fill="none"/>
 <!-- check root -->
 <circle cx="228.7" cy="15.2" r="6.8" fill="#d8dde3" stroke="#8a8a8a" stroke-width="1"/>
 <path d="M224 15l3.5 3.5 6-7.5" stroke="#6fbf3a" stroke-width="2.4" fill="none"/>
 <!-- expand triangles -->
 <g fill="#e6e6e6" stroke="#222" stroke-width="1.2" stroke-linejoin="round">
  <path d="M39.5 33.5l8.5 5.5-8.5 5.5z"/><path d="M39.5 57.5l8.5 5.5-8.5 5.5z"/><path d="M39.5 81.5l8.5 5.5-8.5 5.5z"/><path d="M39.5 105.5l8.5 5.5-8.5 5.5z"/><path d="M39.5 129.5l8.5 5.5-8.5 5.5z"/>
 </g>
 <!-- gear -->
 <g transform="translate(68 39)" fill="#8e8e8e">
  <circle r="5.6"/>
  <g stroke="#8e8e8e" stroke-width="2.6"><path d="M0-8v16M-8 0h16M-5.7-5.7l11.4 11.4M5.7-5.7l-11.4 11.4"/></g>
  <circle r="2.3" fill="#f0f0f0"/>
 </g>
 <!-- folders -->
 <g fill="#8e8e8e">
  <path d="M60 57h6.5l0.5 1.5h9v11.5h-16z"/>
  <path d="M85 81h6.5l0.5 1.5h9v11.5h-16z"/>
  <path d="M85 105h6.5l0.5 1.5h9v11.5h-16z"/>
  <path d="M85 129h6.5l0.5 1.5h9v11.5h-16z"/>
 </g>
 
 <!-- eyes -->
 <g opacity="0.35"><path d="M60 87q8-8 16 0q-8 8-16 0z" fill="#aaa"/><path d="M61 81l14 12" stroke="#f0f0f0" stroke-width="1.5"/></g>
 <path d="M60 111q8-8 16 0q-8 8-16 0z" fill="#8e8e8e"/><circle cx="68" cy="111" r="2.8" fill="#f0f0f0"/><circle cx="68" cy="111" r="1.5" fill="#8e8e8e"/>
 <path d="M60 135q8-8 16 0q-8 8-16 0z" fill="#8e8e8e"/><circle cx="68" cy="135" r="2.8" fill="#f0f0f0"/><circle cx="68" cy="135" r="1.5" fill="#8e8e8e"/>
 <!-- dashed underline -->
 <path d="M82.0 94.9l3.2-3.2M88.1 94.9l3.2-3.2M94.2 94.9l3.2-3.2M100.3 94.9l3.2-3.2M106.4 94.9l3.2-3.2M112.5 94.9l3.2-3.2M118.6 94.9l3.2-3.2M124.7 94.9l3.2-3.2M130.8 94.9l3.2-3.2M136.9 94.9l3.2-3.2M143.0 94.9l3.2-3.2M149.1 94.9l3.2-3.2M82.0 119.2l3.2-3.2M88.1 119.2l3.2-3.2M94.2 119.2l3.2-3.2M100.3 119.2l3.2-3.2M106.4 119.2l3.2-3.2M112.5 119.2l3.2-3.2M118.6 119.2l3.2-3.2M124.7 119.2l3.2-3.2M130.8 119.2l3.2-3.2M136.9 119.2l3.2-3.2M143.0 119.2l3.2-3.2M149.1 119.2l3.2-3.2M155.2 119.2l3.2-3.2" stroke="#6f8fb5" stroke-width="1.9" stroke-linecap="butt"/>
</svg>
<div class="lbl" style="left:97px;top:173px;font-size:11.3px;font-weight:700;color:#fff">Hex_PCB_Holder v7</div>
<div class="lbl" style="left:90.5px;top:197px;font-size:11.8px;color:#333">Document Settings</div>
<div class="lbl" style="left:90.5px;top:221px;font-size:11.8px;color:#333">Named Views</div>
<div class="lbl" style="left:115px;top:245px;font-size:11.8px;color:#333">Origin</div>
<div class="lbl" style="left:115px;top:269px;font-size:11.8px;color:#333">Bodies</div>
<div class="lbl" style="left:115px;top:293px;font-size:11.8px;color:#333">Sketches</div>

<!-- EDIT FEATURE DIALOG -->
<div class="abs" style="left:1128.5px;top:252.7px;width:249px;height:291px;background:#f0f0f0;border:1px solid #c6c6c6"></div>
<div class="abs" style="left:1129px;top:276px;width:248px;height:1px;background:#cfcfcf"></div>
<div class="abs" style="left:1129px;top:506.5px;width:248px;height:1px;background:#b8b8b8"></div>
<svg class="abs" style="left:1125px;top:250px" width="254" height="300">
 <path d="M6.5 9.5v10M8.5 10.5v8" stroke="#666" stroke-width="0.6"/>
 <circle cx="19.5" cy="14.2" r="4.6" fill="#222"/><path d="M16.7 14.2h5.6" stroke="#eee" stroke-width="1.4"/>
 <path d="M237.5 10.5l4.5 3.5-4.5 3.5zM242.5 10.5l4.5 3.5-4.5 3.5z" fill="#222"/>
 <!-- info -->
 <circle cx="17.9" cy="275.8" r="6" fill="#111"/><rect x="17" y="274" width="2" height="5.5" fill="#fff"/><circle cx="18" cy="271.8" r="1.1" fill="#fff"/>
</svg>
<div class="lbl" style="left:1153px;top:258px;font-size:10.5px;color:#444">EDIT FEATURE</div>
<div class="lbl" style="left:1141.3px;top:285px;font-size:11.8px;color:#333">Pattern Type</div>
<div class="lbl" style="left:1141.3px;top:315px;font-size:11.8px;color:#333">Objects</div>
<div class="lbl" style="left:1141.3px;top:345px;font-size:11.8px;color:#333">Axis</div>
<div class="lbl" style="left:1141.3px;top:375px;font-size:11.8px;color:#333">Type</div>
<div class="lbl" style="left:1141.3px;top:405px;font-size:11.8px;color:#333">Suppress</div>
<div class="lbl" style="left:1141.3px;top:435px;font-size:11.8px;color:#333">Quantity</div>
<div class="lbl" style="left:1141.3px;top:465px;font-size:11.8px;color:#333">Compute Option</div>
<!-- controls -->
<div class="abs" style="left:1242.3px;top:278.4px;width:121px;height:27px;background:#fff;border:1px solid #dadada;border-radius:2px"></div>
<div class="abs" style="left:1242.3px;top:308.4px;width:81.3px;height:23.7px;background:#0f96d9"></div>
<div class="abs" style="left:1242.3px;top:339px;width:80.5px;height:26px;background:#fff;border:1px solid #dadada;border-radius:2px"></div>
<div class="abs" style="left:1242.3px;top:369px;width:121px;height:26px;background:#fff;border:1px solid #dadada;border-radius:2px"></div>
<div class="abs" style="left:1249.3px;top:431.5px;width:110px;height:20px;background:#fff;border:1px solid #d0d0d0"></div>
<div class="abs" style="left:1347px;top:432px;width:12.3px;height:19.5px;background:#e2e2e2;border-left:1px solid #d0d0d0"></div>
<div class="abs" style="left:1242.9px;top:459px;width:120.3px;height:26.3px;background:#fff;border:1px solid #dadada;border-radius:2px"></div>
<div class="abs" style="left:1246.2px;top:516.5px;width:59.3px;height:18px;background:#e6e6e6;border:1px solid #c9c9c9"></div>
<div class="abs" style="left:1312.3px;top:516.5px;width:59.1px;height:18px;background:#e6e6e6;border:1px solid #c9c9c9"></div>
<div class="lbl" style="left:1266px;top:285px;font-size:11.3px;color:#333">Features</div>
<div class="lbl" style="left:1264.5px;top:314px;font-size:11.7px;color:#fff">3 selected</div>
<div class="lbl" style="left:1264.5px;top:345px;font-size:11.7px;color:#333">1 selected</div>
<div class="lbl" style="left:1266.4px;top:375px;font-size:11.7px;color:#333">Full</div>
<div class="lbl" style="left:1252px;top:435px;font-size:11.7px;color:#333">3</div>
<div class="lbl" style="left:1250.2px;top:465px;font-size:11.7px;color:#333">Adjust</div>
<div class="lbl" style="left:1267px;top:519px;font-size:12px;color:#555">OK</div>
<div class="lbl" style="left:1323px;top:519px;font-size:12px;color:#555">Cancel</div>
<svg class="abs" style="left:1230px;top:270px" width="149" height="230">
 <!-- features icon -->
 <path d="M17 14l3-3h11v9l-3 3H17z" fill="#a5c8e8" stroke="#333" stroke-width="0.9"/>
 <path d="M17 14h11v9M28 14l3-3" stroke="#333" stroke-width="0.8" fill="none"/>
 <path d="M16 20l-3 3v5h15l3-3" fill="#f4f4f4" stroke="#333" stroke-width="0.9"/>
 <path d="M122 20.5h7l-3.5 4z" fill="#333"/>
 <!-- cursor objects -->
 <path d="M21 43.5v12.5l3-3 2.2 4.5 1.8-0.8-2.2-4.4h4z" fill="#d8d8d8" stroke="#555" stroke-width="0.8"/>
 <path d="M106 48l6.5 6.5M112.5 48l-6.5 6.5" stroke="#555" stroke-width="1.6"/>
 <path d="M21 74.5v12.5l3-3 2.2 4.5 1.8-0.8-2.2-4.4h4z" fill="#e4e4e4" stroke="#555" stroke-width="0.8"/>
 <path d="M106 79l6.5 6.5M112.5 79l-6.5 6.5" stroke="#555" stroke-width="1.6"/>
 <!-- rotate icon -->
 <path d="M20.5 106.5a6.5 6.5 0 1 0 4-2.5" fill="none" stroke="#333" stroke-width="1"/><path d="M19 103l4 0.5-2 3z" fill="#333"/><circle cx="23.5" cy="112" r="1" fill="#333"/>
 <path d="M122 111h7l-3.5 4z" fill="#333"/>
 <!-- checkbox -->
 <rect x="17.5" y="135.7" width="12.5" height="11.8" rx="2" fill="#d8d8d8" stroke="#555" stroke-width="1"/>
 <path d="M20 141.5l2.5 3 5-7" stroke="#222" stroke-width="1.2" fill="none"/>
 <!-- spinner -->
 <path d="M119.5 166.5l2.2-3 2.2 3zM119.5 173.5l2.2 3 2.2-3z" fill="#333"/>
 <path d="M122 200h7l-3.5 4z" fill="#333"/>
</svg>

<!-- timeline controls -->
<svg class="abs" style="left:0;top:800px" width="1379" height="47">
 <g fill="#444">
  <rect x="9.7" y="18" width="2" height="14"/><path d="M22.5 18v14l-10-7z"/>
  <path d="M34.3 25l9-7v14z"/><rect x="44.5" y="21.5" width="2.6" height="7"/>
  <path d="M59.9 18v14l11.6-7z"/>
  <rect x="83.5" y="21.5" width="2.6" height="7"/><path d="M87 18v14l9.5-7z"/>
  <path d="M109.5 18v14l10.3-7z"/><rect x="120.3" y="18" width="2" height="14"/>
 </g>
 <!-- track line -->
 <path d="M153.6 40.5H417.8" stroke="#c4c4c4" stroke-width="2"/>
 <path d="M153.6 34.5v6M176.5 34.5v6M200.5 34.5v6M224.5 34.5v6M248.5 34.5v6M272.5 34.5v6M296.5 34.5v6M321 34.5v6M344.5 34.5v6M368.5 34.5v6M392.5 34.5v6M417 34.5v6" stroke="#c4c4c4" stroke-width="2"/>
 <!-- blue highlighted bg -->
 <rect x="309.9" y="12.4" width="22.4" height="23.1" fill="#0f8fd6"/>
 <rect x="357" y="12.4" width="47.6" height="23.1" fill="#0f8fd6"/>
 <g id="tlicons">
  <!-- sketch icons -->
  <g id="tsk" fill="none">
   <rect x="146" y="16.5" width="13" height="13" stroke="#555" stroke-width="0.9" stroke-dasharray="2 1"/>
   <g fill="#1a80e0"><rect x="144.8" y="15.3" width="2.4" height="2.4"/><rect x="157.8" y="15.3" width="2.4" height="2.4"/><rect x="144.8" y="28.3" width="2.4" height="2.4"/></g>
   <path d="M153 32l2-4 5-5 2 2-5 5z" fill="#f0b030"/><path d="M160 23l2 2 1.5-1.5-2-2z" fill="#e03a3a"/>
  </g>
  <use href="#tsk" x="48.3"/><use href="#tsk" x="144"/><use href="#tsk" x="192.2"/>
  <!-- extrude icons -->
  <g id="tex" transform="translate(-1.5 0)">
   <path d="M170 29h11l3-3v3l-3 3h-11z" fill="#bbb"/>
   <path d="M170 18h11v11h-11z" fill="#6cb3e9"/><path d="M170 18l3-3h11l-3 3z" fill="#9dd0f5"/><path d="M181 18l3-3v11l-3 3z" fill="#3b8fd1"/>
   <path d="M187 29V16.5" stroke="#222" stroke-width="1"/><path d="M185.3 18.5l1.7-3 1.7 3z" fill="#222"/>
  </g>
  <use href="#tex" x="48.4"/><use href="#tex" x="145"/><use href="#tex" x="192.3"/>
  <!-- fillet -->
  <g id="tfi">
   <path d="M241.5 19.5l3.5-3.5h6a7.5 7.5 0 0 1 7.5 7.5v6l-4 3.5h-13z" fill="#dcdcdc" stroke="#555" stroke-width="0.9"/>
   <path d="M247.5 16.5h4a7 7 0 0 1 7 7v3l-3.5 3v-5a7 7 0 0 0-6-6z" fill="#4a9fe0"/>
  </g>
  <use href="#tfi" x="144.3"/>
  <!-- pattern -->
  <g id="tpa" fill="#5aa8e3">
   <circle cx="266.5" cy="20" r="2" fill="none" stroke="#555" stroke-width="0.9"/>
   <circle cx="272.8" cy="16.5" r="2.3"/><circle cx="279" cy="20" r="2.3"/><circle cx="279" cy="27" r="2.3"/><circle cx="272.8" cy="30.5" r="2.3"/><circle cx="266.5" cy="27" r="2.3"/>
  </g>
  <use href="#tpa" x="143.8"/>
 </g>
 <!-- marker -->
 <path d="M423 10h13l-4.5 8h-4z" fill="#555"/><rect x="428.3" y="17" width="2.4" height="25" fill="#555"/>
 <!-- gear -->
 <g transform="translate(1361 25.2)" fill="#9a9a9a">
  <circle r="6"/><g stroke="#9a9a9a" stroke-width="3"><path d="M0-8.5v17M-8.5 0h17M-6-6l12 12M6-6l-12 12"/></g><circle r="2.6" fill="#f1f1f1"/>
 </g>
</svg>
<!-- nav toolbar -->
<div class="abs" style="left:564.1px;top:772.2px;width:252.7px;height:23.5px;background:rgba(236,236,236,0.92)"></div>
<svg class="abs" style="left:560px;top:765px" width="260" height="35">
 <g fill="#333">
  <path d="M28.5 18h7l-3.5 4z"/><path d="M139.5 18h7l-3.5 4z"/><path d="M178 18h7l-3.5 4z"/><path d="M209 18h7l-3.5 4z"/><path d="M239.5 18h7l-3.5 4z"/>
 </g>
 <!-- orbit -->
 <path d="M15 27V11" stroke="#333" stroke-width="1.2"/><path d="M12.5 13l2.5-3.5 2.5 3.5z" fill="#fff" stroke="#333" stroke-width="0.8"/>
 <ellipse cx="15" cy="19.5" rx="8" ry="3.5" fill="none" stroke="#333" stroke-width="1.2"/><path d="M8 23l-2-1.5 3-1.5z" fill="#333"/>
 <!-- look -->
 <rect x="40.5" y="16" width="15" height="10" rx="1" fill="#f2f2f2" stroke="#333" stroke-width="1"/><rect x="43.5" y="19" width="9" height="4" fill="#999" stroke="#333" stroke-width="0.6"/><path d="M42 16l3-4 2 2 4-2.5 1 4.5" fill="#aaa" stroke="#333" stroke-width="0.8"/>
 <!-- pan hand -->
 <path d="M69 26q-4-3-4.5-7 1-1.5 2.5 0l1.5 2v-9.5a1.2 1.2 0 0 1 2.4 0v6-8a1.2 1.2 0 0 1 2.4 0v8-7a1.2 1.2 0 0 1 2.4 0v7-5a1.2 1.2 0 0 1 2.4 0v8q0 4-2.5 6z" fill="#fff" stroke="#333" stroke-width="0.9"/>
 <!-- zoom -->
 <circle cx="96" cy="18" r="4.5" fill="#dbe6ea" stroke="#333" stroke-width="1.2"/><path d="M99.5 21.5l4 4" stroke="#333" stroke-width="2.2"/><path d="M103 12.5h5M105.5 10v5M103 16.5h5" stroke="#333" stroke-width="0.9"/>
 <!-- zoom window -->
 <rect x="118.5" y="11" width="16" height="16" fill="none" stroke="#444" stroke-width="0.8" stroke-dasharray="1.5 1.5"/>
 <circle cx="125.5" cy="18" r="5" fill="#dbe6ea" stroke="#333" stroke-width="1.3"/><path d="M129 21.5l4 4" stroke="#333" stroke-width="2.2"/>
 <!-- display -->
 <rect x="159.5" y="11.5" width="15.5" height="12" rx="1" fill="#7aa3d8" stroke="#333" stroke-width="1"/><path d="M164 27h7l-1-3h-5z" fill="#ddd" stroke="#333" stroke-width="0.7"/>
 <!-- grid -->
 <rect x="190" y="11" width="15.5" height="15.5" fill="#eee" stroke="#666" stroke-width="0.9"/>
 <path d="M193 11v15.5M196 11v15.5M199 11v15.5M202 11v15.5M190 14h15.5M190 17h15.5M190 20h15.5M190 23h15.5" stroke="#777" stroke-width="0.8"/>
 <!-- viewports -->
 <rect x="221" y="12" width="15" height="14" fill="#3f73b8"/><rect x="222.5" y="13.5" width="5.3" height="4.8" fill="#a9c6ea"/><rect x="229.2" y="13.5" width="5.3" height="4.8" fill="#a9c6ea"/><rect x="222.5" y="19.8" width="5.3" height="4.8" fill="#a9c6ea"/><rect x="229.2" y="19.8" width="5.3" height="4.8" fill="#a9c6ea"/>
</svg>
<div class="lbl" style="left:1241px;top:777px;font-size:11.85px;font-weight:700;color:#222">Multiple selections</div>
<!-- small widget in viewport -->
<div class="abs" style="left:824.5px;top:435px;width:114.5px;height:21.6px;background:rgba(236,236,236,0.9)"></div>
<div class="abs" style="left:848px;top:437px;width:30px;height:17px;background:#fff;border:1px solid #c8c8c8"></div>
<div class="abs" style="left:878px;top:437px;width:13px;height:17px;background:#e6e6e6;border:1px solid #c8c8c8;border-left:none"></div>
<div class="lbl" style="left:850px;top:438.5px;font-size:11.5px;color:#333">3</div>
<svg class="abs" style="left:820px;top:430px" width="125" height="30">
 <path d="M7.5 6v19" stroke="#aaa" stroke-width="0.7" stroke-dasharray="1 1"/>
 <path d="M62 13l2.2-3 2.2 3zM62 19l2.2 3 2.2-3z" fill="#333"/>
 <path d="M94.5 13a6.5 6.5 0 1 0 3.5-1.5" fill="none" stroke="#333" stroke-width="1"/><path d="M92.5 10l4 0.5-1.8 3z" fill="#333"/><circle cx="98" cy="15.5" r="1" fill="#333"/>
 <path d="M109 13.5h6.5l-3.25 4z" fill="#333"/>
</svg>
<!-- view cube -->
<svg class="abs" style="left:1270px;top:140px" width="109" height="100">
 <defs><filter id="cshadow" x="-30%" y="-30%" width="160%" height="160%"><feGaussianBlur stdDeviation="3"/></filter></defs>
 <path d="M30 88L80 78L86 88L36 97z" fill="#000" opacity="0.10" filter="url(#cshadow)"/>
 <path d="M64.2 16.5v8" stroke="#8fe08f" stroke-width="1.8"/>
 <text x="58.5" y="16" font-size="11.5" fill="#8fe08f" font-family="Liberation Sans">Y</text>
 <path d="M23 31.2L63.6 25.5L83.5 43.5L37 51z" fill="#ececec" opacity="0.85" stroke="#c4c4c4" stroke-width="0.8"/>
 <path d="M37 51L83.5 43.5L80.6 83.2L39 92.6z" fill="#e4e4e4" opacity="0.85" stroke="#c4c4c4" stroke-width="0.8"/>
 <path d="M23 31.2L37 51L39 92.6L26.7 71.8z" fill="#dcdcdc" opacity="0.85" stroke="#c4c4c4" stroke-width="0.8"/>
 <text x="61" y="72" font-size="10.5" fill="#8e8e8e" font-family="Liberation Sans" transform="rotate(-13 61 72)" text-anchor="middle">RIGHT</text>
 <text x="53" y="41" font-size="7" fill="#9a9a9a" font-family="Liberation Sans" transform="rotate(-15 53 41)" text-anchor="middle">TOP</text>
 <text x="31" y="62" font-size="6.5" fill="#8e8e8e" font-family="Liberation Sans" transform="rotate(62 31 62)" text-anchor="middle">FRONT</text>
 <path d="M20.5 67.5l5.5-1" stroke="#8080f0" stroke-width="1.8"/>
 <text x="9.5" y="73.5" font-size="12.5" fill="#8080f0" font-family="Liberation Sans">Z</text>
 <path d="M80.5 81.5l4.5 4.5" stroke="#f3a0a0" stroke-width="1.4"/>
 <text x="83.5" y="95" font-size="12" fill="#f3a0a0" font-family="Liberation Sans">X</text>
</svg>
<!-- red annotations -->
<svg class="abs" style="left:0;top:0" width="1379" height="847">
 <defs><filter id="rs" x="-10%" y="-10%" width="120%" height="130%"><feDropShadow dx="0.5" dy="1" stdDeviation="0.8" flood-color="#000" flood-opacity="0.35"/></filter></defs>
 <g filter="url(#rs)">
  <path d="M386.4 804L1235.5 336.5L1239 344L387.6 806z" fill="#ff2a10"/>
  <path d="M1248 333.7L1230.5 333.2L1241 350z" fill="#ff2a10"/>
  <rect x="1238.9" y="279.3" width="86.9" height="54.5" rx="5" fill="none" stroke="#ff2a10" stroke-width="3.8"/>
  <rect x="1241.4" y="422.3" width="57" height="30.1" rx="5" fill="none" stroke="#ff2a10" stroke-width="3.8"/>
  <rect x="307.1" y="807.3" width="99.8" height="31.1" rx="5.5" fill="none" stroke="#ff2a10" stroke-width="3.8"/>
 </g>
</svg>

</body></html>
